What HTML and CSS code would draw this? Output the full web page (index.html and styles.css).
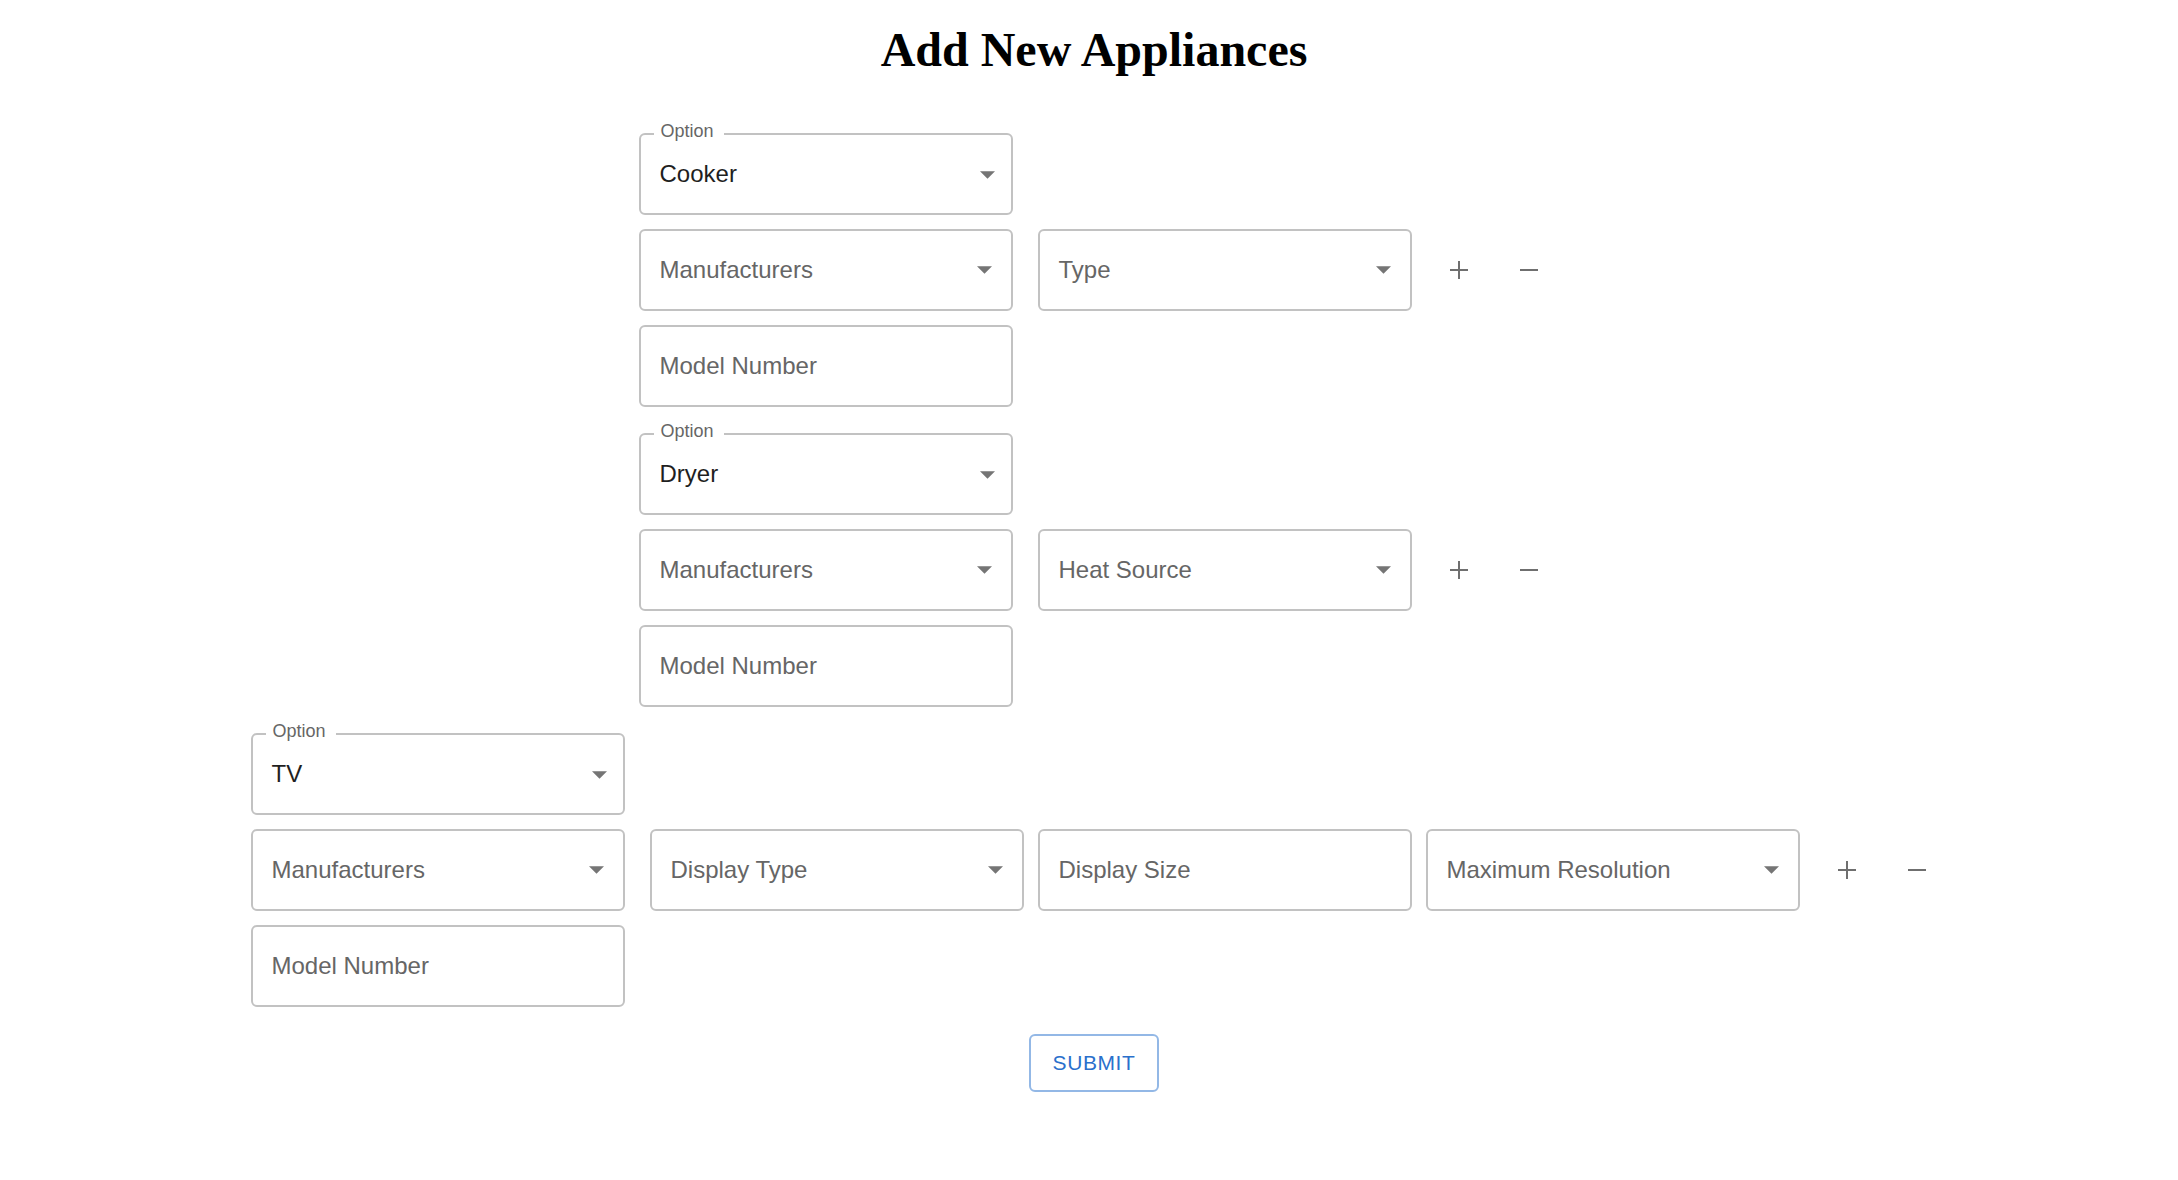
FILE: index.html
```html
<!DOCTYPE html>
<html lang="en">
<head>
<meta charset="utf-8">
<title>Add New Appliances</title>
<link rel="stylesheet" href="styles.css">
</head>
<body>
<h1 class="title">Add New Appliances</h1>
<form class="form">
  <section class="group">
    <div class="row">
      <div class="field select opt">
        <span class="label">Option</span>
        <span class="value">Cooker</span>
        <svg class="arrow" width="15" height="8" viewBox="0 0 10 5"><path d="M0 0l5 5 5-5z"/></svg>
      </div>
    </div>
    <div class="row">
      <div class="field select first">
        <span class="placeholder">Manufacturers</span>
        <svg class="arrow" width="15" height="8" viewBox="0 0 10 5"><path d="M0 0l5 5 5-5z"/></svg>
      </div>
      <div class="field select">
        <span class="placeholder">Type</span>
        <svg class="arrow" width="15" height="8" viewBox="0 0 10 5"><path d="M0 0l5 5 5-5z"/></svg>
      </div>
      <div class="actions">
        <button type="button" class="icon-btn" aria-label="add"><svg width="18" height="18" viewBox="0 0 18 18"><path d="M9 0v18M0 9h18"/></svg></button>
        <button type="button" class="icon-btn" aria-label="remove"><svg width="18" height="18" viewBox="0 0 18 18"><path d="M0 9h18"/></svg></button>
      </div>
    </div>
    <div class="row">
      <div class="field"><span class="placeholder">Model Number</span></div>
    </div>
  </section>

  <section class="group">
    <div class="row">
      <div class="field select opt">
        <span class="label">Option</span>
        <span class="value">Dryer</span>
        <svg class="arrow" width="15" height="8" viewBox="0 0 10 5"><path d="M0 0l5 5 5-5z"/></svg>
      </div>
    </div>
    <div class="row">
      <div class="field select first">
        <span class="placeholder">Manufacturers</span>
        <svg class="arrow" width="15" height="8" viewBox="0 0 10 5"><path d="M0 0l5 5 5-5z"/></svg>
      </div>
      <div class="field select">
        <span class="placeholder">Heat Source</span>
        <svg class="arrow" width="15" height="8" viewBox="0 0 10 5"><path d="M0 0l5 5 5-5z"/></svg>
      </div>
      <div class="actions">
        <button type="button" class="icon-btn" aria-label="add"><svg width="18" height="18" viewBox="0 0 18 18"><path d="M9 0v18M0 9h18"/></svg></button>
        <button type="button" class="icon-btn" aria-label="remove"><svg width="18" height="18" viewBox="0 0 18 18"><path d="M0 9h18"/></svg></button>
      </div>
    </div>
    <div class="row">
      <div class="field"><span class="placeholder">Model Number</span></div>
    </div>
  </section>

  <section class="group">
    <div class="row">
      <div class="field select opt">
        <span class="label">Option</span>
        <span class="value">TV</span>
        <svg class="arrow" width="15" height="8" viewBox="0 0 10 5"><path d="M0 0l5 5 5-5z"/></svg>
      </div>
    </div>
    <div class="row">
      <div class="field select first">
        <span class="placeholder">Manufacturers</span>
        <svg class="arrow" width="15" height="8" viewBox="0 0 10 5"><path d="M0 0l5 5 5-5z"/></svg>
      </div>
      <div class="field select">
        <span class="placeholder">Display Type</span>
        <svg class="arrow" width="15" height="8" viewBox="0 0 10 5"><path d="M0 0l5 5 5-5z"/></svg>
      </div>
      <div class="field">
        <span class="placeholder">Display Size</span>
      </div>
      <div class="field select">
        <span class="placeholder">Maximum Resolution</span>
        <svg class="arrow" width="15" height="8" viewBox="0 0 10 5"><path d="M0 0l5 5 5-5z"/></svg>
      </div>
      <div class="actions">
        <button type="button" class="icon-btn" aria-label="add"><svg width="18" height="18" viewBox="0 0 18 18"><path d="M9 0v18M0 9h18"/></svg></button>
        <button type="button" class="icon-btn" aria-label="remove"><svg width="18" height="18" viewBox="0 0 18 18"><path d="M0 9h18"/></svg></button>
      </div>
    </div>
    <div class="row">
      <div class="field"><span class="placeholder">Model Number</span></div>
    </div>
  </section>

  <div class="submit-row">
    <button type="button" class="submit">Submit</button>
  </div>
</form>
</body>
</html>
```

FILE: styles.css
```css
body {
  margin: 0;
  background: #ffffff;
  font-family: "Liberation Sans", Arial, sans-serif;
}

.title {
  margin: 22px 0 0;
  padding-left: 10px;
  font-family: "Liberation Serif", "Times New Roman", serif;
  font-size: 48px;
  font-weight: 700;
  line-height: 56px;
  text-align: center;
  color: #000000;
}

.form {
  display: flex;
  flex-direction: column;
  align-items: center;
  padding-top: 55px;
}

.group {
  display: flex;
  flex-direction: column;
  gap: 14px;
  margin-bottom: 26px;
}

.row {
  display: flex;
  align-items: center;
}

.field {
  position: relative;
  display: flex;
  align-items: center;
  box-sizing: border-box;
  width: 374px;
  height: 82px;
  padding: 0 19px;
  border: 2px solid #c2c2c2;
  border-radius: 6px;
  font-size: 24px;
  background: #ffffff;
}

.field.select {
  padding-right: 19px;
}

.field.opt {
  padding-right: 16px;
}

.row > .field + .field {
  margin-left: 14px;
}

.row > .field.first + .field {
  margin-left: 25px;
}

.value {
  color: #1f1f1f;
}

.placeholder {
  color: #666666;
}

.arrow {
  margin-left: auto;
  fill: #757575;
}

.opt .arrow {
  margin-top: 2px;
}

.label {
  position: absolute;
  top: -14px;
  left: 13px;
  padding: 0 10px 0 7px;
  background: #ffffff;
  font-size: 18px;
  line-height: 20px;
  color: #666666;
}

.actions {
  display: flex;
  align-items: center;
  gap: 48px;
  margin-left: 36px;
}

.icon-btn {
  display: flex;
  align-items: center;
  justify-content: center;
  width: 22px;
  height: 22px;
  padding: 0;
  border: 0;
  background: transparent;
}

.icon-btn svg {
  stroke: #6f6f6f;
  stroke-width: 2;
  fill: none;
}

.submit-row {
  display: flex;
  justify-content: center;
  margin-top: 1px;
}

.submit {
  box-sizing: border-box;
  width: 130px;
  height: 58px;
  margin-left: 10px;
  border: 2px solid #93b8e6;
  border-radius: 6px;
  background: #ffffff;
  color: #2a70cc;
  font-family: "Liberation Sans", Arial, sans-serif;
  font-size: 21px;
  letter-spacing: 0.6px;
  text-transform: uppercase;
}
```
